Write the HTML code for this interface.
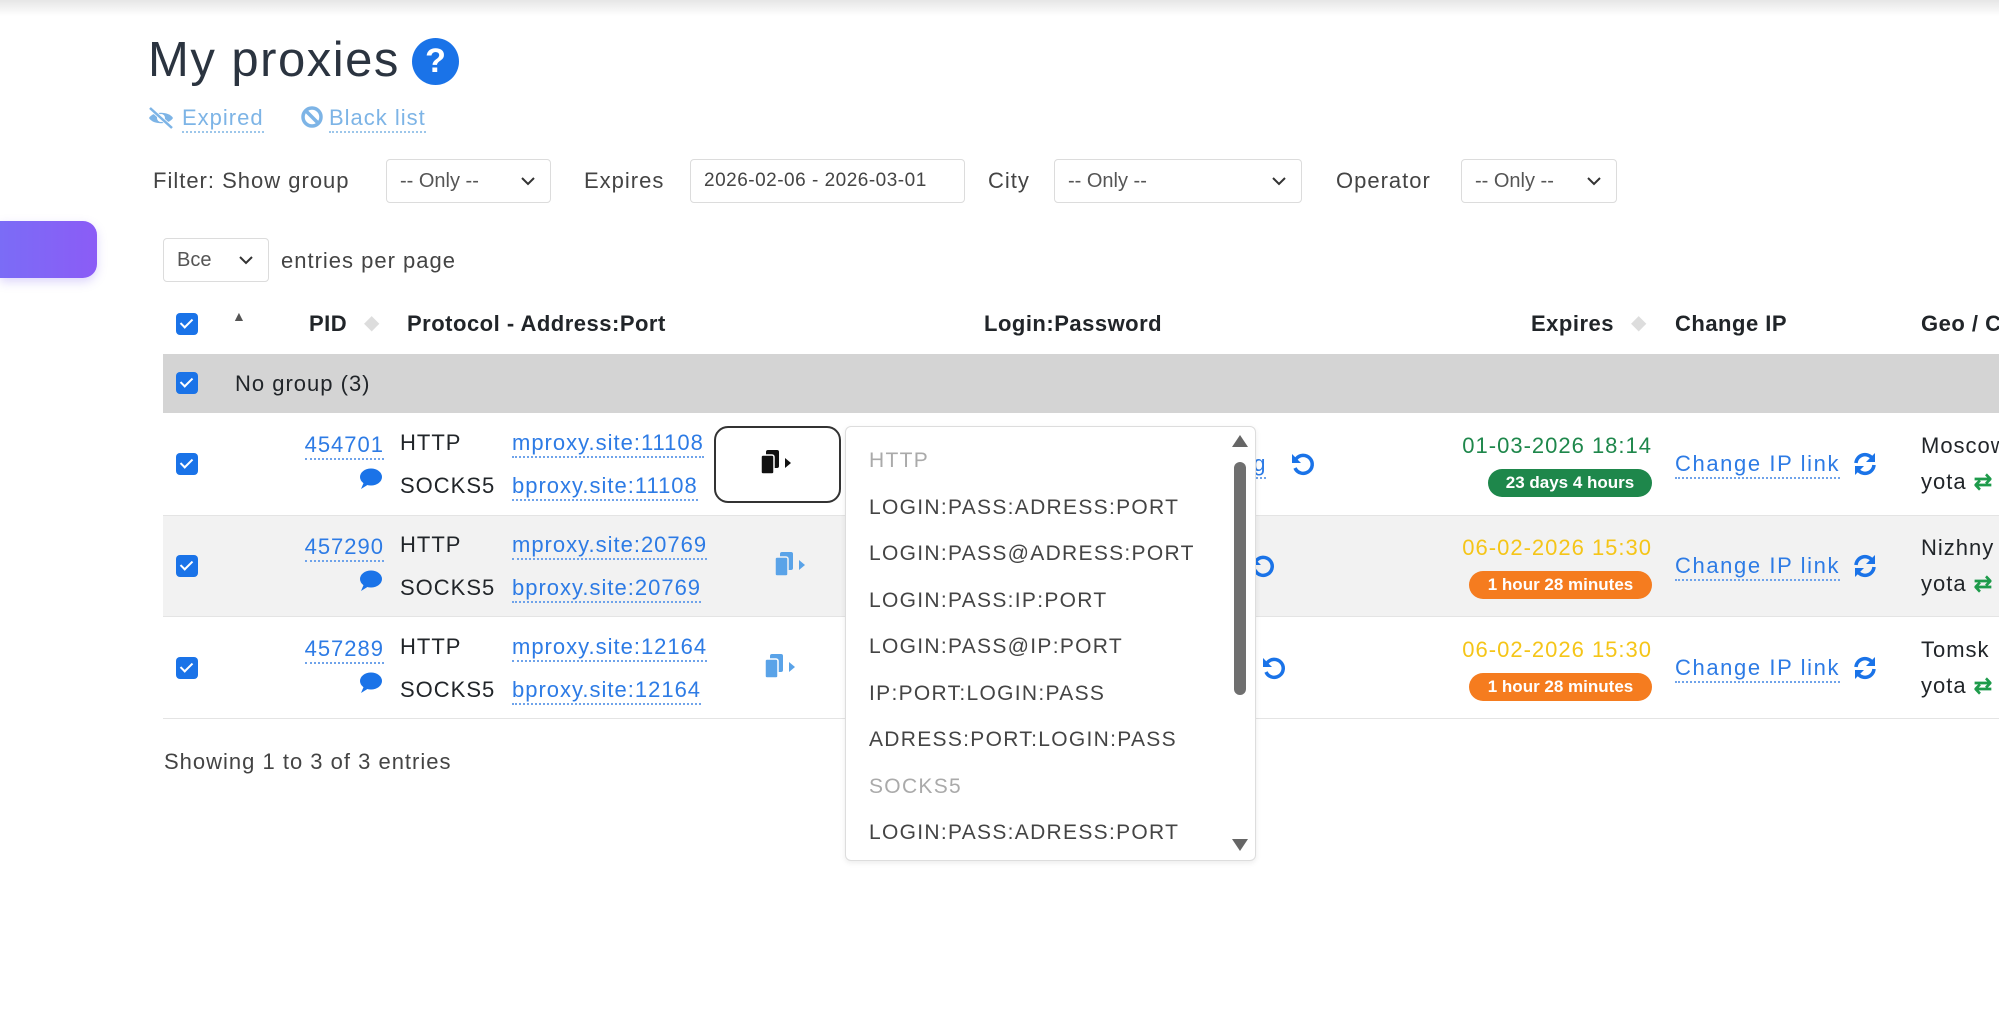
<!DOCTYPE html>
<html><head><meta charset="utf-8"><style>
*{margin:0;padding:0;box-sizing:border-box}
body{width:1999px;height:1019px;overflow:hidden;background:#fff;font-family:"Liberation Sans",sans-serif;color:#212529;position:relative}
.a{position:absolute;white-space:nowrap}
.t{font-size:22px;letter-spacing:1px}
.lnk{color:#2d7be5;border-bottom:2px dotted #6fa3ea;line-height:26px}
.sel{position:absolute;border:1px solid #dcdcdc;border-radius:4px;background:#fff;font-size:20px;color:#555;padding-left:13px;display:flex;align-items:center}
.sel svg{position:absolute;right:14px;top:50%;margin-top:-5px}
.cb{position:absolute;width:22px;height:22px;border-radius:4px;background:#1a73e8}
.cb:after{content:"";position:absolute;left:7px;top:3px;width:5px;height:10px;border:solid #fff;border-width:0 2.5px 2.5px 0;transform:rotate(45deg)}
.th{font-weight:bold;font-size:22px;letter-spacing:.5px}
.badge{position:absolute;height:28px;border-radius:14px;color:#fff;font-weight:bold;font-size:17px;display:flex;align-items:center;justify-content:center}
.dd{font-size:21px;color:#444;letter-spacing:1.3px}
</style></head><body>
<div class="a" style="left:0;top:0;width:1999px;height:16px;background:linear-gradient(#e6e6e6,#fff)"></div>
<div class="a" style="left:148px;top:32px;font-size:49px;color:#2b3440;letter-spacing:1.5px">My proxies</div>
<div class="a" style="left:412px;top:38px;width:47px;height:47px;border-radius:50%;background:#1a73e8;color:#fff;font-weight:bold;font-size:34px;text-align:center;line-height:47px">?</div>
<svg class="a" style="left:147px;top:106px" width="28" height="24" viewBox="0 0 28 24"><path d="M2 12c4-7 20-7 24 0c-4 7-20 7-24 0z" fill="#7db4e6"/><circle cx="14" cy="12" r="4" fill="#fff"/><path d="M3 2l22 20" stroke="#fff" stroke-width="4"/><path d="M3 2l22 20" stroke="#7db4e6" stroke-width="2.5"/></svg>
<div class="a t" style="left:182px;top:104px;color:#7db4e6;border-bottom:2px dotted #9cc6ea;line-height:27px">Expired</div>
<svg class="a" style="left:300px;top:105px" width="24" height="24" viewBox="0 0 24 24"><circle cx="12" cy="12" r="9" fill="none" stroke="#7db4e6" stroke-width="3.5"/><path d="M6 6l12 12" stroke="#7db4e6" stroke-width="3.5"/></svg>
<div class="a t" style="left:329px;top:104px;color:#7db4e6;border-bottom:2px dotted #9cc6ea;line-height:27px">Black list</div>

<div class="a t" style="left:153px;top:168px;color:#444">Filter: Show group</div>
<div class="sel" style="left:386px;top:159px;width:165px;height:44px">-- Only --<svg width="16" height="10"><path d="M2 2l6 6 6-6" stroke="#333" stroke-width="2" fill="none"/></svg></div>
<div class="a t" style="left:584px;top:168px;color:#444">Expires</div>
<div class="sel" style="left:690px;top:159px;width:275px;height:44px;color:#444;font-size:19px;letter-spacing:.5px">2026-02-06 - 2026-03-01</div>
<div class="a t" style="left:988px;top:168px;color:#444">City</div>
<div class="sel" style="left:1054px;top:159px;width:248px;height:44px">-- Only --<svg width="16" height="10"><path d="M2 2l6 6 6-6" stroke="#333" stroke-width="2" fill="none"/></svg></div>
<div class="a t" style="left:1336px;top:168px;color:#444">Operator</div>
<div class="sel" style="left:1461px;top:159px;width:156px;height:44px">-- Only --<svg width="16" height="10"><path d="M2 2l6 6 6-6" stroke="#333" stroke-width="2" fill="none"/></svg></div>

<div class="a" style="left:0;top:221px;width:97px;height:57px;border-radius:0 14px 14px 0;background:linear-gradient(90deg,#7b6cf6,#8b5cf6);box-shadow:0 4px 10px rgba(120,90,240,.25)"></div>
<div class="sel" style="left:163px;top:238px;width:106px;height:44px;font-size:20px">Bce<svg width="16" height="10"><path d="M2 2l6 6 6-6" stroke="#333" stroke-width="2" fill="none"/></svg></div>
<div class="a t" style="left:281px;top:248px;color:#444">entries per page</div>

<div class="cb" style="left:176px;top:313px"></div>
<div class="a" style="left:232px;top:308px;font-size:14px;color:#555">▲</div>
<div class="a th" style="left:309px;top:311px">PID</div>
<div class="a" style="left:364px;top:310px;font-size:20px;color:#ddd">◆</div>
<div class="a th" style="left:407px;top:311px">Protocol - Address:Port</div>
<div class="a th" style="left:984px;top:311px">Login:Password</div>
<div class="a th" style="left:1531px;top:311px">Expires</div>
<div class="a" style="left:1631px;top:310px;font-size:20px;color:#ddd">◆</div>
<div class="a th" style="left:1675px;top:311px">Change IP</div>
<div class="a th" style="left:1921px;top:311px">Geo / C</div>

<div class="a" style="left:163px;top:354px;width:1836px;height:59px;background:#d4d4d4"></div>
<div class="cb" style="left:176px;top:372px"></div>
<div class="a t" style="left:235px;top:371px">No group (3)</div>

<div class="a" style="left:163px;top:515px;width:1836px;height:102px;background:#f2f2f2;border-top:1px solid #e4e4e4;border-bottom:1px solid #e4e4e4"></div>
<div class="a" style="left:163px;top:718px;width:1836px;height:1px;background:#e4e4e4"></div>

<div class="cb" style="left:176px;top:453px"></div>
<div class="cb" style="left:176px;top:555px"></div>
<div class="cb" style="left:176px;top:657px"></div>

<div class="a t lnk" style="right:1615px;top:432px">454701</div>
<div class="a t lnk" style="right:1615px;top:534px">457290</div>
<div class="a t lnk" style="right:1615px;top:636px">457289</div>
<svg class="a" style="left:359px;top:468px" width="24" height="22"><ellipse cx="12" cy="9" rx="11" ry="8.5" fill="#1a73e8"/><path d="M5 14l-3 7 8-5z" fill="#1a73e8"/></svg>
<svg class="a" style="left:359px;top:570px" width="24" height="22"><ellipse cx="12" cy="9" rx="11" ry="8.5" fill="#1a73e8"/><path d="M5 14l-3 7 8-5z" fill="#1a73e8"/></svg>
<svg class="a" style="left:359px;top:672px" width="24" height="22"><ellipse cx="12" cy="9" rx="11" ry="8.5" fill="#1a73e8"/><path d="M5 14l-3 7 8-5z" fill="#1a73e8"/></svg>

<div class="a t" style="left:400px;top:430px">HTTP</div>
<div class="a t" style="left:400px;top:473px">SOCKS5</div>
<div class="a t" style="left:400px;top:532px">HTTP</div>
<div class="a t" style="left:400px;top:575px">SOCKS5</div>
<div class="a t" style="left:400px;top:634px">HTTP</div>
<div class="a t" style="left:400px;top:677px">SOCKS5</div>

<div class="a t lnk" style="left:512px;top:430px">mproxy.site:11108</div>
<div class="a t lnk" style="left:512px;top:473px">bproxy.site:11108</div>
<div class="a t lnk" style="left:512px;top:532px">mproxy.site:20769</div>
<div class="a t lnk" style="left:512px;top:575px">bproxy.site:20769</div>
<div class="a t lnk" style="left:512px;top:634px">mproxy.site:12164</div>
<div class="a t lnk" style="left:512px;top:677px">bproxy.site:12164</div>

<div class="a" style="left:714px;top:426px;width:127px;height:77px;border:2px solid #333;border-radius:14px;background:#fff"></div>
<svg class="a" style="left:759px;top:449px" width="36" height="30" viewBox="0 0 36 30"><rect x="7" y="1" width="13" height="18" rx="2" fill="#111"/><rect x="2" y="6" width="13" height="19" rx="2" fill="#111" stroke="#fff" stroke-width="1.5"/><path d="M26 9l6 5-6 5z" fill="#111"/></svg>
<svg class="a" style="left:773px;top:551px" width="36" height="30" viewBox="0 0 36 30"><rect x="7" y="1" width="13" height="18" rx="2" fill="#5aa3e8"/><rect x="2" y="6" width="13" height="19" rx="2" fill="#5aa3e8" stroke="#f2f2f2" stroke-width="1.5"/><path d="M26 9l6 5-6 5z" fill="#5aa3e8"/></svg>
<svg class="a" style="left:763px;top:653px" width="36" height="30" viewBox="0 0 36 30"><rect x="7" y="1" width="13" height="18" rx="2" fill="#5aa3e8"/><rect x="2" y="6" width="13" height="19" rx="2" fill="#5aa3e8" stroke="#fff" stroke-width="1.5"/><path d="M26 9l6 5-6 5z" fill="#5aa3e8"/></svg>

<div class="a t lnk" style="left:1240px;top:451px">ug</div>
<svg class="a" style="left:1290px;top:451px" width="26" height="26" viewBox="0 0 26 26"><path d="M6 8a9 9 0 1 1-1 9" fill="none" stroke="#1a73e8" stroke-width="3.5"/><path d="M2 3v9h9z" fill="#1a73e8"/></svg>
<svg class="a" style="left:1250px;top:553px" width="26" height="26" viewBox="0 0 26 26"><path d="M6 8a9 9 0 1 1-1 9" fill="none" stroke="#1a73e8" stroke-width="3.5"/><path d="M2 3v9h9z" fill="#1a73e8"/></svg>
<svg class="a" style="left:1261px;top:655px" width="26" height="26" viewBox="0 0 26 26"><path d="M6 8a9 9 0 1 1-1 9" fill="none" stroke="#1a73e8" stroke-width="3.5"/><path d="M2 3v9h9z" fill="#1a73e8"/></svg>

<div class="a t" style="right:347px;top:433px;color:#1e874b">01-03-2026 18:14</div>
<div class="badge" style="left:1488px;top:469px;width:164px;background:#1e874b">23 days 4 hours</div>
<div class="a t" style="right:347px;top:535px;color:#f5c518">06-02-2026 15:30</div>
<div class="badge" style="left:1469px;top:571px;width:183px;background:#f57c1f">1 hour 28 minutes</div>
<div class="a t" style="right:347px;top:637px;color:#f5c518">06-02-2026 15:30</div>
<div class="badge" style="left:1469px;top:673px;width:183px;background:#f57c1f">1 hour 28 minutes</div>

<div class="a t lnk" style="left:1675px;top:451px;letter-spacing:1.6px">Change IP link</div>
<div class="a t lnk" style="left:1675px;top:553px;letter-spacing:1.6px">Change IP link</div>
<div class="a t lnk" style="left:1675px;top:655px;letter-spacing:1.6px">Change IP link</div>
<svg class="a" style="left:1852px;top:451px" width="26" height="26" viewBox="0 0 26 26"><path d="M4 12a9 9 0 0 1 16-5M22 14a9 9 0 0 1-16 5" fill="none" stroke="#1a73e8" stroke-width="3.5"/><path d="M23 2v9h-9zM3 24v-9h9z" fill="#1a73e8"/></svg>
<svg class="a" style="left:1852px;top:553px" width="26" height="26" viewBox="0 0 26 26"><path d="M4 12a9 9 0 0 1 16-5M22 14a9 9 0 0 1-16 5" fill="none" stroke="#1a73e8" stroke-width="3.5"/><path d="M23 2v9h-9zM3 24v-9h9z" fill="#1a73e8"/></svg>
<svg class="a" style="left:1852px;top:655px" width="26" height="26" viewBox="0 0 26 26"><path d="M4 12a9 9 0 0 1 16-5M22 14a9 9 0 0 1-16 5" fill="none" stroke="#1a73e8" stroke-width="3.5"/><path d="M23 2v9h-9zM3 24v-9h9z" fill="#1a73e8"/></svg>

<div class="a t" style="left:1921px;top:433px">Moscow</div>
<div class="a t" style="left:1921px;top:469px">yota <span style="color:#1e9b4b;font-weight:bold">⇄</span></div>
<div class="a t" style="left:1921px;top:535px">Nizhny</div>
<div class="a t" style="left:1921px;top:571px">yota <span style="color:#1e9b4b;font-weight:bold">⇄</span></div>
<div class="a t" style="left:1921px;top:637px">Tomsk</div>
<div class="a t" style="left:1921px;top:673px">yota <span style="color:#1e9b4b;font-weight:bold">⇄</span></div>

<div class="a t" style="left:164px;top:749px;color:#444">Showing 1 to 3 of 3 entries</div>

<div class="a" style="left:845px;top:426px;width:411px;height:435px;background:#fff;border:1px solid #ddd;border-radius:6px;box-shadow:0 2px 6px rgba(0,0,0,.08)"></div>
<div class="a dd" style="left:869px;top:449px;color:#aaa">HTTP</div>
<div class="a dd" style="left:869px;top:496px">LOGIN:PASS:ADRESS:PORT</div>
<div class="a dd" style="left:869px;top:542px">LOGIN:PASS@ADRESS:PORT</div>
<div class="a dd" style="left:869px;top:589px">LOGIN:PASS:IP:PORT</div>
<div class="a dd" style="left:869px;top:635px">LOGIN:PASS@IP:PORT</div>
<div class="a dd" style="left:869px;top:682px">IP:PORT:LOGIN:PASS</div>
<div class="a dd" style="left:869px;top:728px">ADRESS:PORT:LOGIN:PASS</div>
<div class="a dd" style="left:869px;top:775px;color:#aaa">SOCKS5</div>
<div class="a dd" style="left:869px;top:821px">LOGIN:PASS:ADRESS:PORT</div>
<div class="a" style="left:1232px;top:435px;width:0;height:0;border-left:8px solid transparent;border-right:8px solid transparent;border-bottom:12px solid #666"></div>
<div class="a" style="left:1234px;top:462px;width:12px;height:233px;border-radius:6px;background:#6f6f6f"></div>
<div class="a" style="left:1232px;top:839px;width:0;height:0;border-left:8px solid transparent;border-right:8px solid transparent;border-top:12px solid #666"></div>
</body></html>
